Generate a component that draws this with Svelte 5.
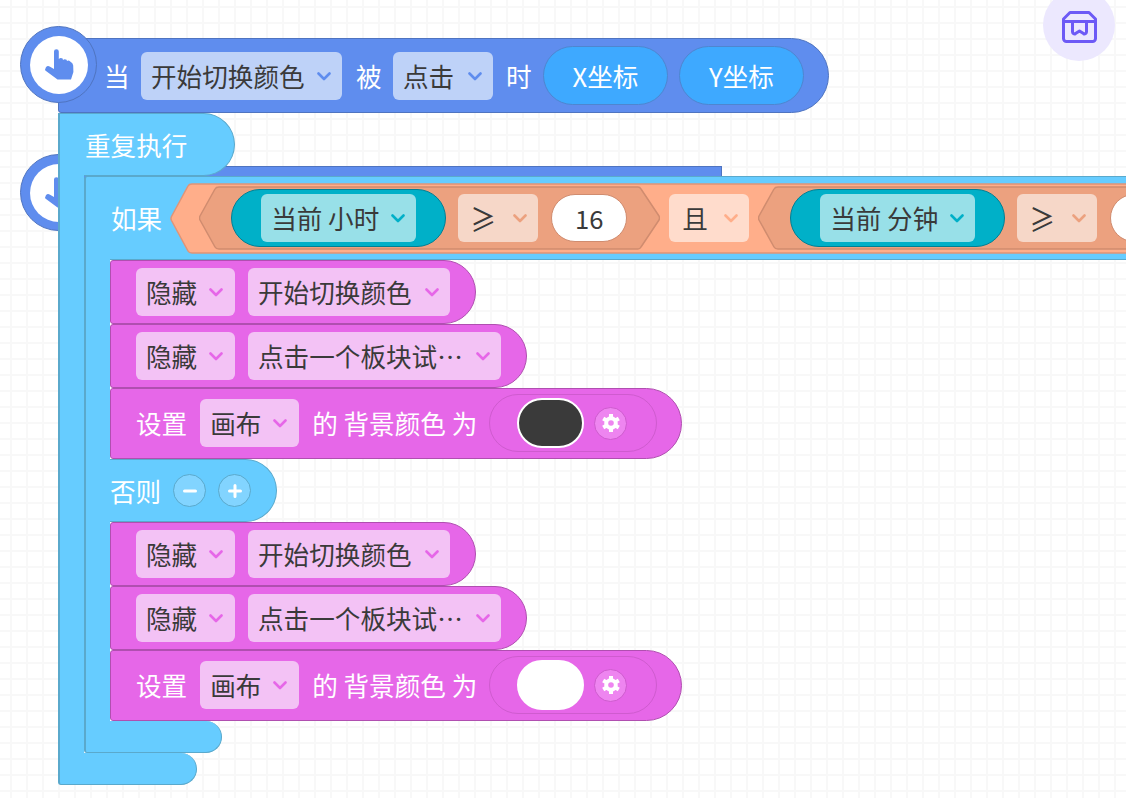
<script>
  const hexOuter = 'M1.5 33.5 L18 3 Q19 1 22 1 H1100 V70 H22 Q19 70 18 68 L1.5 37.5 Q0.5 35.5 1.5 33.5 Z';
  const innerA = 'M1 30 L16 3 Q17 1 20 1 H439 Q441 1 442 3 L460 30 Q461 32 460 34 L442 61 Q441 63 439 63 H20 Q17 63 16 61 L1 34 Q0 32 1 30 Z';
  const innerB = 'M1 30 L16 3 Q17 1 20 1 H460 V63 H20 Q17 63 16 61 L1 34 Q0 32 1 30 Z';

  const branches = [
    { key: 'then', swatch: 'dark' },
    { key: 'else', swatch: 'light' }
  ];
</script>

{#snippet chevron(color)}
  <svg class="chev" width="14" height="9" viewBox="0 0 14 9" style:color={color}>
    <path d="M1.5 1.5 L7 7 L12.5 1.5" fill="none" stroke="currentColor" stroke-width="2.6" stroke-linecap="round" stroke-linejoin="round" />
  </svg>
{/snippet}

{#snippet hand()}
  <svg class="hand" width="31" height="33" viewBox="0 0 31 33">
    <path d="M10 3.6 a2.4 2.4 0 0 1 4.8 0 V11 q1.8 -2 3.8 -.4 L19 12 q1.6 -1.6 3.6 -.2 L23 13 q1.6 -1 3.2 .4 q2.8 1.4 3 4 L29.4 24 L27 31.5 H13.5 L2 23 Q.4 21.6 1.8 19.4 Q3.4 17.4 5.6 18.4 L10 21 Z" fill="#5f8dee" />
  </svg>
{/snippet}

{#snippet startCap()}
  <div class="cap"><div class="cap-in">{@render hand()}</div></div>
{/snippet}

{#snippet gear()}
  <svg width="20" height="20" viewBox="0 0 20 20">
    <g stroke="#fff" stroke-width="4">
      <line x1="10" y1="1" x2="10" y2="19" />
      <line x1="2.2" y1="5.5" x2="17.8" y2="14.5" />
      <line x1="2.2" y1="14.5" x2="17.8" y2="5.5" />
    </g>
    <circle cx="10" cy="10" r="6.8" fill="#fff" />
    <circle cx="10" cy="10" r="2.8" fill="#ee85f0" />
  </svg>
{/snippet}

{#snippet pinkBlocks(swatch)}
  <div class="pink small w1">
    <div class="dd dd-pink">隐藏{@render chevron('#e667e8')}</div>
    <div class="dd dd-pink">开始切换颜色{@render chevron('#e667e8')}</div>
  </div>
  <div class="pink small w2">
    <div class="dd dd-pink">隐藏{@render chevron('#e667e8')}</div>
    <div class="dd dd-pink">点击一个板块试…{@render chevron('#e667e8')}</div>
  </div>
  <div class="pink tall">
    <span class="lbl">设置</span>
    <div class="dd dd-pink">画布{@render chevron('#e667e8')}</div>
    <span class="lbl">的 背景颜色 为</span>
    <div class="color">
      <div class="swatch {swatch}"></div>
      <div class="gearbtn">{@render gear()}</div>
    </div>
  </div>
{/snippet}

<div class="canvas">
  <div class="store">
    <svg width="35" height="32" viewBox="0 0 35 32" fill="none" stroke="#6d5af6" stroke-width="3" stroke-linejoin="round" stroke-linecap="round">
      <path d="M8 1.5 H27 L33.5 8 V27.5 a3 3 0 0 1 -3 3 H4.5 a3 3 0 0 1 -3 -3 V8 Z" />
      <path d="M1.5 10.5 H33.5" />
      <path d="M10.5 11 V21 a2 2 0 0 0 3 1.6 L17.5 20 L21.5 22.6 a2 2 0 0 0 3 -1.6 V11" />
    </svg>
  </div>

  <div class="hat back"></div>
  <div class="backcap">{@render startCap()}</div>

  <div class="stack">
    <div class="hat front">
      <div class="frontcap">{@render startCap()}</div>
      <span class="lbl">当</span>
      <div class="dd dd-blue w201">开始切换颜色{@render chevron('#5f8dee')}</div>
      <span class="lbl">被</span>
      <div class="dd dd-blue w100">点击{@render chevron('#5f8dee')}</div>
      <span class="lbl">时</span>
      <div class="param">X坐标</div>
      <div class="param">Y坐标</div>
    </div>

    <div class="loop">
      <div class="loop-head"><span class="lbl">重复执行</span></div>
      <div class="loop-body">
        <div class="if-head">
          <span class="lbl">如果</span>
          <div class="cond">
            <svg class="shape" width="1100" height="71" viewBox="0 0 1100 71"><path d={hexOuter} fill="#ffae8a" stroke="#e09477" stroke-width="1.5" /></svg>
            <div class="cmp first">
              <svg class="shape" width="461" height="64" viewBox="0 0 461 64"><path d={innerA} fill="#eca17f" stroke="#d08c6f" stroke-width="1.5" /></svg>
              <div class="sensor"><div class="dd dd-teal">当前 小时{@render chevron('#00b0c8')}</div></div>
              <div class="dd dd-op"><span class="op">≥</span>{@render chevron('#eca17f')}</div>
              <div class="num">16</div>
            </div>
            <div class="dd dd-and">且{@render chevron('#ffae8a')}</div>
            <div class="cmp second">
              <svg class="shape" width="461" height="64" viewBox="0 0 461 64"><path d={innerB} fill="#eca17f" stroke="#d08c6f" stroke-width="1.5" /></svg>
              <div class="sensor"><div class="dd dd-teal">当前 分钟{@render chevron('#00b0c8')}</div></div>
              <div class="dd dd-op"><span class="op">≥</span>{@render chevron('#eca17f')}</div>
              <div class="num"></div>
            </div>
          </div>
        </div>

        {#each branches as b}
          {#if b.key === 'else'}
            <div class="else-head">
              <span class="lbl">否则</span>
              <div class="round"><svg width="14" height="14" viewBox="0 0 14 14"><path d="M1.5 7 H12.5" stroke="#fff" stroke-width="3" stroke-linecap="round" /></svg></div>
              <div class="round"><svg width="14" height="14" viewBox="0 0 14 14"><path d="M1.5 7 H12.5 M7 1.5 V12.5" stroke="#fff" stroke-width="3" stroke-linecap="round" /></svg></div>
            </div>
          {/if}
          <div class="branch">{@render pinkBlocks(b.swatch)}</div>
        {/each}

        <div class="if-foot"></div>
      </div>
      <div class="loop-foot"></div>
    </div>
  </div>
</div>

<style>
  :global(body) { margin: 0; }
  .canvas {
    position: relative;
    width: 1126px;
    height: 798px;
    overflow: hidden;
    background-color: #fff;
    background-image:
      linear-gradient(to right, #f8f8f8 2px, transparent 2px),
      linear-gradient(to bottom, #f8f8f8 2px, transparent 2px);
    background-size: 16px 16px;
    background-position: 10px 6px;
    font-family: "Noto Sans CJK SC", "Noto Sans", sans-serif;
    font-size: 25.6px;
    line-height: 1;
    color: #3a3a3a;
  }
  .store {
    position: absolute;
    left: 1043px;
    top: -11px;
    width: 72px;
    height: 72px;
    border-radius: 50%;
    background: #ece8fe;
    display: flex;
    align-items: center;
    justify-content: center;
    padding-top: 3px;
    box-sizing: border-box;
  }
  .stack {
    position: relative;
    padding: 38px 0 0 58px;
  }
  .lbl { color: #fff; white-space: pre; }
  .hat {
    box-sizing: border-box;
    background: #5f8dee;
    border: 1px solid #4f74c0;
  }
  .hat.back {
    position: absolute;
    left: 58px;
    top: 166px;
    width: 664px;
    height: 20px;
    border-bottom: 0;
    border-radius: 0;
  }
  .hat.back::after {
    content: "";
    position: absolute;
    left: 100%;
    top: 7px;
    width: 5px;
    height: 5px;
    background: radial-gradient(circle at 100% 0, transparent 5px, #5f8dee 5px);
  }
  .backcap { position: absolute; left: 20px; top: 154px; }
  .frontcap { position: absolute; left: -39px; top: -13px; }
  .cap {
    box-sizing: border-box;
    width: 77px;
    height: 77px;
    border-radius: 50%;
    background: #5f8dee;
    border: 1px solid #4f74c0;
    display: flex;
    align-items: center;
    justify-content: center;
  }
  .cap-in {
    width: 58px;
    height: 58px;
    border-radius: 50%;
    background: #fff;
    display: flex;
    align-items: center;
    justify-content: center;
  }
  .hand { margin: 0 0 0 1px; }
  .hat.front {
    position: relative;
    width: 771px;
    height: 75px;
    border-radius: 0 37.5px 37.5px 3px;
    padding-left: 45px;
    display: flex;
    align-items: center;
    white-space: nowrap;
  }
  .hat.front > .lbl:nth-of-type(1) { margin-right: 11.4px; }
  .hat.front > .lbl:nth-of-type(2) { margin: 0 11.4px 0 14px; }
  .hat.front > .lbl:nth-of-type(3) { margin: 0 11.4px 0 13px; }
  .param {
    box-sizing: border-box;
    width: 125px;
    height: 59px;
    border-radius: 30px;
    background: #3ea9ff;
    border: 1px solid #4e86d0;
    color: #fff;
    display: flex;
    align-items: center;
    justify-content: center;
    margin-right: 11px;
  }
  .dd {
    box-sizing: border-box;
    height: 48px;
    padding: 0 11px 0 10px;
    border-radius: 6px;
    display: flex;
    align-items: center;
    gap: 12px;
    white-space: pre;
    flex: none;
  }
  .w201 { width: 201px; justify-content: space-between; }
  .w100 { width: 100px; justify-content: space-between; }
  .chev { flex: none; margin-top: 1px; }
  .dd-blue { background: #bed2f8; }
  .dd-pink { background: #f3c2f5; }
  .dd-teal { background: #98e0e8; }
  .dd-op { background: #f6d7c8; width: 80px; justify-content: space-between; padding-left: 12px; }
  .op { display: block; transform: scale(1, 1.2); }
  .dd-and { background: #ffdccc; width: 80px; justify-content: space-between; padding-left: 13px; margin: 0 9px; }

  .loop { width: 100%; }
  .loop-head {
    box-sizing: border-box;
    width: 177px;
    height: 63px;
    background: #66ccff;
    border: 1px solid #5aa9cc;
    border-left-width: 2px;
    border-radius: 0 32px 32px 0;
    padding-left: 25px;
    display: flex;
    align-items: center;
    position: relative;
  }
  .loop-head::after {
    content: "";
    position: absolute;
    left: 0;
    bottom: -1px;
    width: 24px;
    height: 1px;
    background: #66ccff;
  }
  .loop-body {
    box-sizing: border-box;
    border-left: 2px solid #5aa9cc;
    padding-left: 24px;
    background: linear-gradient(to right, #66ccff 24px, transparent 24px);
    position: relative;
  }
  .loop-foot {
    box-sizing: border-box;
    width: 139px;
    height: 32px;
    background: #66ccff;
    border: 1px solid #5aa9cc;
    border-top: 0;
    border-left-width: 2px;
    border-radius: 0 16px 16px 3px;
  }
  .if-head {
    position: relative;
    box-sizing: border-box;
    height: 84px;
    margin-right: -200px;
    background: #66ccff;
    border: 1px solid #5aa9cc;
    border-left-width: 2px;
    border-top-left-radius: 3px;
    padding-left: 25px;
    display: flex;
    align-items: center;
    gap: 8px;
  }
  .if-head::after {
    content: "";
    position: absolute;
    left: 0;
    bottom: -1px;
    width: 24px;
    height: 1px;
    background: #66ccff;
  }
  .cond {
    position: relative;
    height: 71px;
    display: flex;
    align-items: center;
    padding-left: 29px;
    flex: none;
  }
  .shape { position: absolute; left: 0; top: 0; }
  .cmp {
    position: relative;
    height: 64px;
    width: 461px;
    box-sizing: border-box;
    display: flex;
    align-items: center;
    padding-left: 32px;
    flex: none;
  }
  .sensor {
    position: relative;
    box-sizing: border-box;
    height: 58px;
    width: 215px;
    padding: 0 29px 0 29px;
    border-radius: 29px;
    background: #00b0c8;
    border: 1px solid #007f94;
    display: flex;
    align-items: center;
    justify-content: center;
    margin-right: 12px;
  }
  .cmp > .dd { position: relative; }
  .cond > .dd { position: relative; }
  .num {
    position: relative;
    box-sizing: border-box;
    width: 76px;
    height: 48px;
    border-radius: 24px;
    background: #fff;
    border: 1px solid #d08c6f;
    display: flex;
    align-items: center;
    justify-content: center;
    margin-left: 13px;
    flex: none;
  }
  .branch {
    box-sizing: border-box;
    display: flex;
    flex-direction: column;
    align-items: flex-start;
    border-left: 2px solid #5aa9cc;
    padding-left: 24px;
    background: linear-gradient(to right, #66ccff 24px, transparent 24px);
  }
  .pink {
    box-sizing: border-box;
    background: #e667e8;
    border: 1px solid #b04fb0;
    display: flex;
    align-items: center;
    white-space: nowrap;
  }
  .pink.small {
    height: 64px;
    padding-left: 25px;
    gap: 13px;
    border-radius: 3px 32px 32px 3px;
  }
  .w1 { width: 366px; }
  .w2 { width: 417px; }
  .w2 .dd:last-child { width: 253px; justify-content: space-between; }
  .w1 .dd:last-child { width: 202px; justify-content: space-between; }
  .pink.small .dd:first-child { width: 99px; }
  .pink.tall {
    width: 572px;
    height: 71px;
    padding: 0 0 1px 25px;
    gap: 12px;
    border-radius: 3px 36px 36px 3px;
  }
  .tall .dd { width: 99px; margin-left: 1px; margin-right: 1px; }
  .color {
    position: relative;
    box-sizing: border-box;
    width: 168px;
    height: 58px;
    border-radius: 29px;
    border: 1px solid #cf5bcf;
    display: flex;
    align-items: center;
    padding-left: 27px;
    gap: 10px;
  }
  .swatch {
    box-sizing: border-box;
    width: 67px;
    height: 50px;
    border-radius: 25px;
    border: 2px solid #fff;
    flex: none;
  }
  .swatch.dark { background: #3a3a3a; }
  .swatch.light { background: #fff; }
  .gearbtn {
    box-sizing: border-box;
    width: 33px;
    height: 33px;
    border-radius: 50%;
    background: #ee85f0;
    border: 1px solid #cf5bcf;
    display: flex;
    align-items: center;
    justify-content: center;
    flex: none;
  }
  .else-head {
    position: relative;
    box-sizing: border-box;
    width: 193px;
    height: 63px;
    background: #66ccff;
    border: 1px solid #5aa9cc;
    border-left: 2px solid #5aa9cc;
    border-radius: 0 32px 32px 0;
    display: flex;
    align-items: center;
    padding-left: 24px;
    gap: 12px;
  }
  .else-head::before,
  .else-head::after {
    content: "";
    position: absolute;
    left: 0;
    width: 24px;
    height: 1px;
    background: #66ccff;
  }
  .else-head::before { top: -1px; }
  .else-head::after { bottom: -1px; }
  .round {
    box-sizing: border-box;
    width: 33px;
    height: 33px;
    border-radius: 50%;
    background: #82d4ff;
    border: 1px solid #5aa9cc;
    display: flex;
    align-items: center;
    justify-content: center;
    flex: none;
  }
  .if-foot {
    box-sizing: border-box;
    width: 138px;
    height: 32px;
    background: #66ccff;
    border: 1px solid #5aa9cc;
    border-top: 0;
    border-left-width: 2px;
    border-radius: 0 16px 16px 3px;
  }
</style>
